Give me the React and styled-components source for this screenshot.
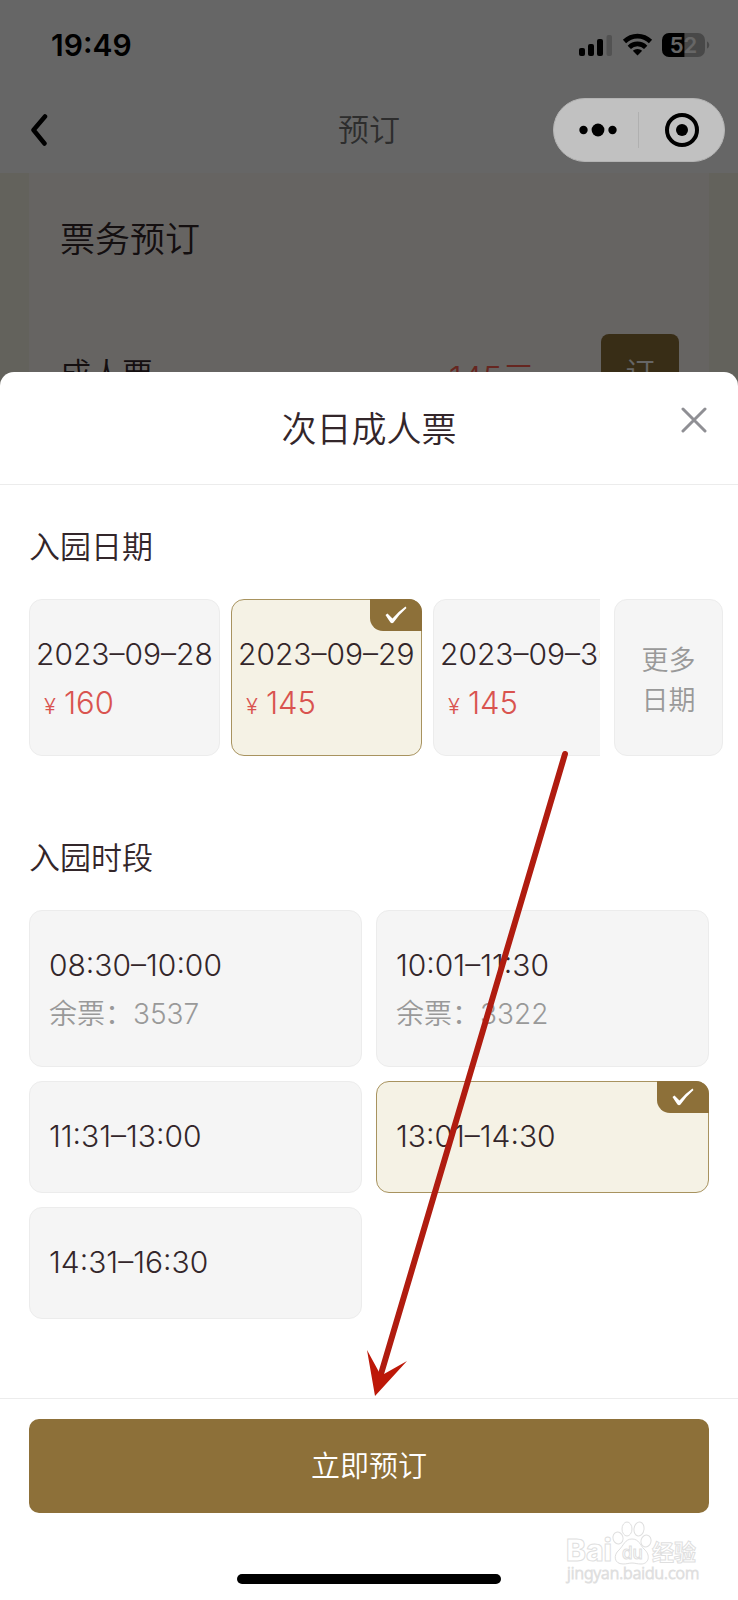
import React, { useState } from 'react'
import styled, { createGlobalStyle } from 'styled-components'

const theme = {
    gold: '#8d7039',
    cream: '#f5f2e5',
    text: '#33262a',
    grey: '#999999',
    red: '#d9534f',
    line: '#ececec',
    card: '#f5f5f5',
}

const dates = [
    { day: '2023–09–28', price: 160 },
    { day: '2023–09–29', price: 145 },
    { day: '2023–09–30', price: 145 },
]

const slots = [
    { time: '08:30–10:00', left: 3537 },
    { time: '10:01–11:30', left: 3322 },
    { time: '11:31–13:00' },
    { time: '13:01–14:30' },
    { time: '14:31–16:30' },
]

export default function App() {
    const [date, setDate] = useState(1)
    const [slot, setSlot] = useState(3)

    return <Screen>
        <GlobalStyle />
        <Page>
            <StatusBar>
                <Clock>19:49</Clock>
                <StatusIcons />
            </StatusBar>
            <NavBar>
                <BackButton aria-label="返回">
                    <svg width="18" height="34" viewBox="0 0 18 34" fill="none" stroke="#000" strokeWidth="4.5" strokeLinecap="round" strokeLinejoin="round">
                        <path d="M15 3.500 3.500 17 14.500 30.500" />
                    </svg>
                </BackButton>
                <NavTitle>预订</NavTitle>
                <Capsule>
                    <MenuButton aria-label="更多">
                        <svg width="38" height="14" viewBox="0 0 38 14">
                            <circle cx="4.500" cy="7" r="4.200" />
                            <circle cx="19" cy="7" r="6.400" />
                            <circle cx="33.500" cy="7" r="4.200" />
                        </svg>
                    </MenuButton>
                    <Divider />
                    <CapsuleButton aria-label="关闭">
                        <svg width="36" height="36" viewBox="0 0 36 36">
                            <circle cx="18" cy="18" r="15" fill="none" stroke="#000" strokeWidth="4" />
                            <circle cx="18" cy="18" r="6" />
                        </svg>
                    </CapsuleButton>
                </Capsule>
            </NavBar>
            <PageBody>
                <TicketCard>
                    <CardTitle>票务预订</CardTitle>
                    <TicketRow>
                        <TicketName>成人票</TicketName>
                        <TicketPrice>145元</TicketPrice>
                        <OrderButton>订</OrderButton>
                    </TicketRow>
                </TicketCard>
            </PageBody>
        </Page>
        <Mask />
        <Sheet>
            <SheetHeader>
                <SheetTitle>次日成人票</SheetTitle>
                <CloseButton aria-label="关闭">
                    <svg width="26" height="26" viewBox="0 0 26 26" stroke="#8f8f94" strokeWidth="3" strokeLinecap="round">
                        <path d="M2 2l22 22M24 2 2 24" />
                    </svg>
                </CloseButton>
            </SheetHeader>
            <SheetBody>
                <SectionTitle>入园日期</SectionTitle>
                <DateRow>
                    <DateList>
                        {dates.map((d, i) => <DateCard key={d.day} $active={i === date} onClick={() => setDate(i)}>
                            <Label>{d.day}</Label>
                            <Price><Yen>¥</Yen>{d.price}</Price>
                            {i === date && <CheckBadge />}
                        </DateCard>)}
                    </DateList>
                    <MoreButton>更多<br />日期</MoreButton>
                </DateRow>
                <SectionTitle $spaced>入园时段</SectionTitle>
                <SlotGrid>
                    {slots.map((s, i) => <SlotCard key={s.time} $active={i === slot} onClick={() => setSlot(i)}>
                        <Label>{s.time}</Label>
                        {s.left && <Remaining>余票：{s.left}</Remaining>}
                        {i === slot && <CheckBadge />}
                    </SlotCard>)}
                </SlotGrid>
            </SheetBody>
            <Footer>
                <SubmitButton>立即预订</SubmitButton>
                <HomeIndicator />
            </Footer>
            <Watermark />
        </Sheet>
        <Arrow />
    </Screen>
}

function StatusIcons() {
    return <svg width="134" height="26" viewBox="0 0 134 26">
        <rect x="1" y="16" width="6" height="8" rx="2" />
        <rect x="10" y="12" width="6" height="12" rx="2" />
        <rect x="19" y="7" width="6" height="17" rx="2" />
        <rect x="28.500" y="3" width="5.500" height="21" rx="2" fill="#cccccc" />
        <g fill="none" stroke="#000" strokeWidth="4.6">
            <path d="M46.5 9.5a18.5 18.5 0 0 1 26 0" />
            <path d="M51.3 15.4a11.4 11.4 0 0 1 16.400 0" />
        </g>
        <path d="M59.5 23.5 54.8 18.8a6.8 6.8 0 0 1 9.4 0z" />
        <path d="M106.500 1H120a7 7 0 0 1 7 7v10a7 7 0 0 1-7 7h-13.500z" fill="#b5b5b5" />
        <path d="M106.500 1H91a7 7 0 0 0-7 7v10a7 7 0 0 0 7 7h15.500z" />
        <path d="M129 9.500c3 1 3 6 0 7z" fill="#b5b5b5" />
        <text x="105.500" y="21" textAnchor="middle" fontFamily="Inter, sans-serif" fontSize="22" fontWeight="600" fill="#fff">52</text>
    </svg>
}

function CheckBadge() {
    return <Badge>
        <svg width="22" height="18" viewBox="0 0 22 18" fill="#fff">
            <path d="M.5 9 2.500 7.500 7.500 12.500Q14 5 20.500 .5L21.500 2Q14 8.500 8.500 16.500Q7 18 5.500 16.500Q3 13 .5 9Z" />
        </svg>
    </Badge>
}

function Arrow() {
    return <ArrowSvg width="204" height="648" viewBox="0 0 204 648">
        <path d="M199 5 15 625" stroke="#b01c10" strokeWidth="6" strokeLinecap="round" />
        <path d="M9 647 1 601 13 623 18 625 41 612z" fill="#bd1808" />
    </ArrowSvg>
}

function Watermark() {
    return <WatermarkSvg width="136" height="70" viewBox="0 0 136 70" fill="#fff" stroke="#dfdfdf" strokeWidth="1">
        <text x="1" y="43" fontSize="30" fontFamily="Inter, sans-serif" fontWeight="800">Bai</text>
        <text x="87" y="42" fontSize="22" fontFamily="'Noto Sans CJK SC', sans-serif" fontWeight="700">经验</text>
        <ellipse cx="53" cy="20" rx="5" ry="6" transform="rotate(-15 53 20)" />
        <ellipse cx="62" cy="11" rx="5" ry="7" />
        <ellipse cx="74" cy="11" rx="5" ry="7" transform="rotate(8 74 11)" />
        <ellipse cx="81" cy="23" rx="5" ry="6" transform="rotate(15 81 23)" />
        <path d="M67 21c7 0 8 6 12 10 7 6 5 15-3 15-4 0-6-1-9-1s-5 1-9 1c-9 0-10-9-4-14 5-5 6-11 13-11z" />
        <text x="57" y="41" fontSize="17" fontFamily="Inter, sans-serif" fontWeight="500">du</text>
        <text x="2" y="61" fontSize="16" fontFamily="'Noto Sans', sans-serif">jingyan.baidu.com</text>
    </WatermarkSvg>
}

const GlobalStyle = createGlobalStyle`
    * {
        box-sizing: border-box;
    }
    body {
        margin: 0;
        font-family: Inter, "Noto Sans CJK SC", sans-serif;
        font-weight: 350;
        color: ${theme.text};
    }
    button {
        margin: 0;
        padding: 0;
        border: 0;
        background: none;
        font: inherit;
        color: inherit;
        cursor: pointer;
    }
    svg {
        display: block;
    }
`

const Screen = styled.div`
    position: relative;
    display: flex;
    flex-direction: column;
    justify-content: flex-end;
    min-height: 100vh;
    overflow: hidden;
`

// booking page lying under the sheet
const Page = styled.div`
    position: absolute;
    inset: 0;
    display: flex;
    flex-direction: column;
    background-color: #fff;
`
const StatusBar = styled.div`
    display: flex;
    align-items: center;
    justify-content: space-between;
    height: 90px;
    padding: 0 26px 0 51px;
`
const Clock = styled.span`
    font-size: 30px;
    font-weight: 600;
    color: #000;
`
const NavBar = styled.div`
    display: grid;
    grid-template-columns: 1fr auto 1fr;
    align-items: center;
    height: 83px;
    padding: 0 13px 3px 30px;
`
const BackButton = styled.button`
    justify-self: start;
`
const NavTitle = styled.h1`
    margin: 0;
    padding: 0 17px 6px 0;
    font-size: 31px;
    font-weight: 350;
    color: #707070;
`
const Capsule = styled.div`
    position: relative;
    z-index: 2;
    justify-self: end;
    display: flex;
    align-items: center;
    width: 172px;
    height: 64px;
    border: 1px solid #b4b4b4;
    border-radius: 32px;
    background-color: #c1c1c1;
`
const CapsuleButton = styled.button`
    flex: 1;
    display: flex;
    justify-content: center;
`
const MenuButton = styled(CapsuleButton)`
    flex: 0 0 84px;
    padding-left: 4px;
`
const Divider = styled.div`
    width: 1px;
    height: 36px;
    background-color: #b0b0b0;
`
const PageBody = styled.div`
    flex: 1;
    padding: 0 29px;
    background-color: #f8f4e6;
`
const TicketCard = styled.div`
    height: 100%;
    padding: 40px 30px 40px 31px;
    background-color: #fffaf5;
`
const CardTitle = styled.h2`
    margin: 0;
    font-size: 35px;
    font-weight: 350;
    line-height: 52px;
`
const TicketRow = styled.div`
    display: flex;
    align-items: flex-start;
    margin-top: 69px;
    font-size: 31px;
    line-height: 80px;
`
const TicketName = styled.span`
    flex: 1;
`
const TicketPrice = styled.span`
    padding-right: 66px;
    font-size: 33px;
    line-height: 88px;
    color: #ff6050;
`
const OrderButton = styled.button`
    width: 78px;
    height: 78px;
    border-radius: 8px;
    background-color: ${theme.gold};
    color: #fff;
    font-size: 29px;
`
const Mask = styled.div`
    position: absolute;
    inset: 0;
    z-index: 1;
    background-color: rgba(0, 0, 0, 0.6);
`

const Sheet = styled.section`
    position: relative;
    z-index: 3;
    border-radius: 14px 14px 0 0;
    background-color: #fff;
`
const SheetHeader = styled.header`
    display: grid;
    grid-template-columns: 1fr auto 1fr;
    height: 113px;
    padding: 0 31px;
    border-bottom: 1px solid ${theme.line};
`
const SheetTitle = styled.h2`
    grid-column: 2;
    margin: 0;
    font-size: 35px;
    font-weight: 350;
    line-height: 114px;
`
const CloseButton = styled.button`
    align-self: start;
    justify-self: end;
    margin-top: 35px;
`
const SheetBody = styled.div`
    padding: 40px 29px 79px;
`
const SectionTitle = styled.h3`
    margin: ${p => p.$spaced ? '80px' : '0'} 0 30px;
    font-size: 31px;
    font-weight: 350;
    line-height: 44px;
`
const DateRow = styled.div`
    display: flex;
    gap: 14px;
    margin-right: -14px;
`
const DateList = styled.div`
    flex: 1;
    display: flex;
    gap: 11px;
    overflow: hidden;
`
const Card = styled.button`
    position: relative;
    display: flex;
    flex-direction: column;
    align-items: flex-start;
    border: 1px solid ${p => p.$active ? '#a8935f' : theme.line};
    border-radius: 13px;
    background-color: ${p => p.$active ? theme.cream : theme.card};
`
const DateCard = styled(Card)`
    flex: 0 0 191px;
    height: 157px;
    padding: 32px 6px;
`
const SlotCard = styled(Card)`
    padding: 32px 19px;
`
const Label = styled.span`
    font-size: 30px;
    line-height: 44px;
    white-space: nowrap;
`
const Price = styled.span`
    display: flex;
    align-items: baseline;
    gap: 8px;
    margin: 8px 0 0 8px;
    font-size: 31px;
    line-height: 38px;
    color: ${theme.red};
`
const Yen = styled.span`
    font-size: 22px;
`
const Remaining = styled.span`
    margin-top: 8px;
    font-size: 28px;
    line-height: 38px;
    color: ${theme.grey};
`
const Badge = styled.span`
    position: absolute;
    top: -1px;
    right: -1px;
    display: flex;
    align-items: center;
    justify-content: center;
    width: 52px;
    height: 32px;
    border-radius: 0 13px 0 13px;
    background-color: ${theme.gold};
`
const MoreButton = styled.button`
    width: 109px;
    padding-top: 6px;
    border: 1px solid ${theme.line};
    border-radius: 13px;
    background-color: ${theme.card};
    font-size: 27px;
    line-height: 40px;
    color: ${theme.grey};
`
const SlotGrid = styled.div`
    display: grid;
    grid-template-columns: 1fr 1fr;
    grid-template-rows: 157px 112px 112px;
    gap: 14px;
`
const Footer = styled.footer`
    display: flex;
    flex-direction: column;
    align-items: center;
    padding: 20px 29px 16px;
    border-top: 1px solid ${theme.line};
`
const SubmitButton = styled.button`
    width: 100%;
    height: 94px;
    padding-bottom: 4px;
    border-radius: 10px;
    background-color: ${theme.gold};
    font-size: 29px;
    color: #fff;
`
const HomeIndicator = styled.div`
    width: 264px;
    height: 10px;
    margin-top: 61px;
    border-radius: 5px;
    background-color: #000;
`
const WatermarkSvg = styled.svg`
    position: absolute;
    right: 37px;
    bottom: 12px;
`
const ArrowSvg = styled.svg`
    position: absolute;
    z-index: 4;
    left: 366px;
    bottom: 203px;
`
